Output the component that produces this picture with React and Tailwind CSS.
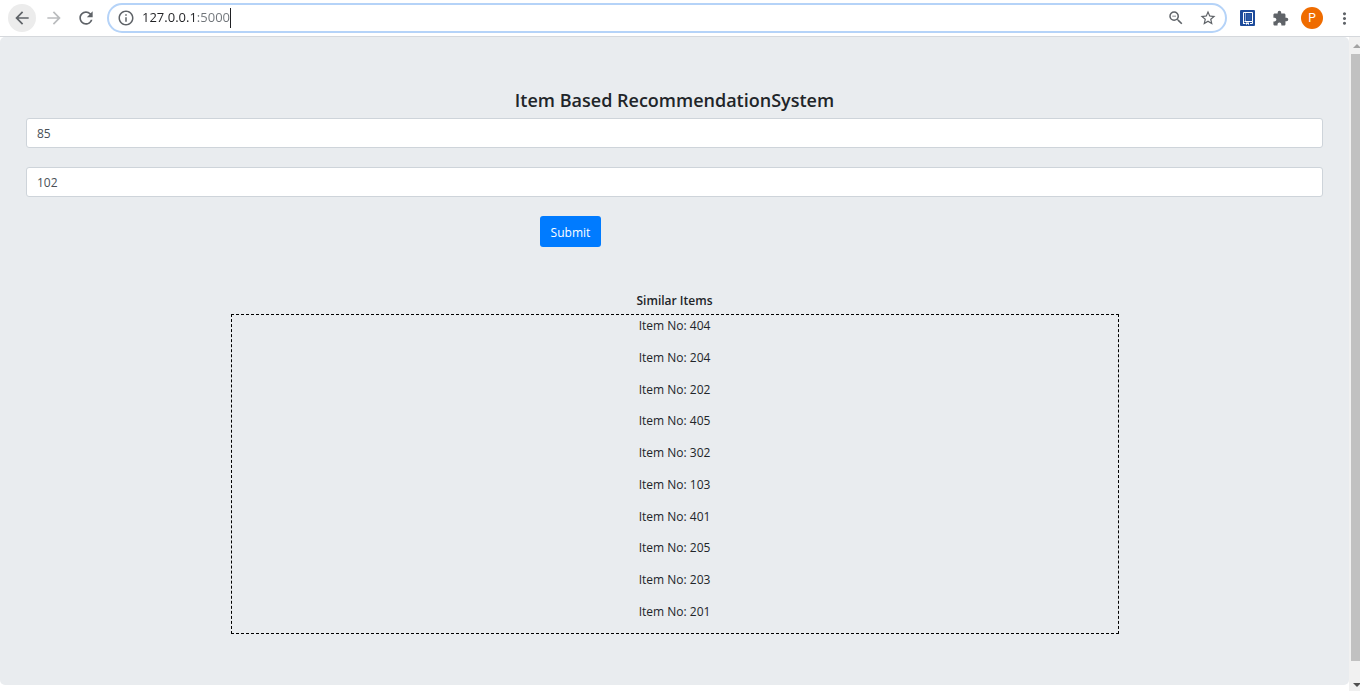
import React, { useState } from 'react';
import {
  MdArrowBack,
  MdArrowForward,
  MdRefresh,
  MdInfoOutline,
  MdZoomOut,
  MdStarBorder,
  MdExtension,
  MdMoreVert,
} from 'react-icons/md';

const items = [404, 204, 202, 405, 302, 103, 401, 205, 203, 201];

function NotebookIcon() {
  return (
    <svg width="15" height="16" viewBox="0 0 15 16" aria-hidden="true">
      <rect width="15" height="16" rx="1" fill="#1d4b9b" />
      <path d="M3.500 13V2.500H12.500V11.500H4.500" fill="none" stroke="#fff" strokeWidth="1" />
      <path d="M3 13.500H5.500M10 13.500H12.500V11.500" fill="none" stroke="#fff" strokeWidth="1" />
      <path d="M5.500 3V11" stroke="#8fa9d6" strokeWidth="1" />
      <rect x="7" y="4" width="4" height="6" fill="#2c5aa6" />
      <path d="M6 12.500V15L7.500 13.700L9 15V12.500Z" fill="#fff" />
    </svg>
  );
}

function BrowserBar() {
  const [url, setUrl] = useState('127.0.0.1:5000');
  return (
    <header className="flex h-[37px] shrink-0 items-center border-b border-[#d5d8dc] bg-white pl-2 pr-1.5 text-[#5f6368]">
      <nav className="flex items-center gap-1">
        <button type="button" aria-label="Back" className="flex size-7 items-center justify-center rounded-full bg-[#ececec]">
          <MdArrowBack size={20} />
        </button>
        <button type="button" aria-label="Forward" className="flex size-7 items-center justify-center text-[#babcbe]">
          <MdArrowForward size={20} />
        </button>
        <button type="button" aria-label="Reload" className="flex size-7 items-center justify-center">
          <MdRefresh size={20} />
        </button>
      </nav>
      <div className="ml-[7px] flex h-[30px] min-w-0 flex-1 items-center rounded-full border-2 border-[#b5d3f8] bg-white px-2">
        <button type="button" aria-label="Site information">
          <MdInfoOutline size={18} />
        </button>
        <input
          aria-label="Address"
          value={url}
          onChange={(e) => setUrl(e.target.value)}
          className="ml-[7px] bg-linear-to-r from-[#202124] from-[54px] to-[#6f7479] to-[54px] bg-clip-text text-[13px] text-transparent outline-none [field-sizing:content]"
        />
        <span className="h-5 w-px bg-[#202124]" />
        <div className="ml-auto flex items-center gap-[14px]">
          <button type="button" aria-label="Zoom">
            <MdZoomOut size={18} />
          </button>
          <button type="button" aria-label="Bookmark">
            <MdStarBorder size={18} />
          </button>
        </div>
      </div>
      <div className="ml-[13px] flex items-center">
        <button type="button" aria-label="Notebook">
          <NotebookIcon />
        </button>
        <button type="button" aria-label="Extensions" className="ml-[17px]">
          <MdExtension size={17} />
        </button>
        <button type="button" aria-label="Profile" className="ml-3 flex size-[22px] items-center justify-center rounded-full bg-[#ef6c00] font-[Roboto,sans-serif] text-xs text-white">
          P
        </button>
        <button type="button" aria-label="Menu" className="ml-3">
          <MdMoreVert size={19} />
        </button>
      </div>
    </header>
  );
}

function NumberField({ label, initial }) {
  const [value, setValue] = useState(initial);
  return (
    <input
      aria-label={label}
      value={value}
      onChange={(e) => setValue(e.target.value)}
      className="block h-[30px] w-full rounded-[3px] border border-[#ced4da] bg-white px-[10px] text-xs text-[#495057] outline-none"
    />
  );
}

function Scrollbar() {
  return (
    <div aria-hidden="true" className="flex w-[11px] shrink-0 flex-col items-end bg-[#f1f1f1]">
      <div className="flex h-[17px] w-[9px] items-center justify-end">
        <svg width="7" height="4" viewBox="0 0 7 4"><path d="M0 4L4 0L7 3V4Z" fill="#a3a3a3" /></svg>
      </div>
      <div className="w-[9px] flex-1 bg-[#c1c1c1]" />
      <div className="flex h-[30px] w-[9px] items-end justify-end pb-1">
        <svg width="7" height="4" viewBox="0 0 7 4"><path d="M0 0H7V1L4 4Z" fill="#505050" /></svg>
      </div>
    </div>
  );
}

export default function App() {
  return (
    <div className="flex min-h-screen flex-col bg-white font-['Open_Sans',sans-serif]">
      <BrowserBar />
      <div className="flex flex-1">
        <main className="min-w-0 flex-1 pb-1.5">
          <section className="h-full rounded-[5px] bg-[#e9ecef] px-[26px] py-[51px] text-xs leading-[22px] text-[#212529]">
            <form onSubmit={(e) => e.preventDefault()}>
              <h1 className="mb-[6px] text-center text-lg leading-6 font-semibold">Item Based RecommendationSystem</h1>
              <div className="flex flex-col gap-[19px]">
                <NumberField label="First item" initial="85" />
                <NumberField label="Second item" initial="102" />
                <div className="-mx-[26px] flex">
                  <button type="submit" className="ml-[40%] h-[31px] rounded-[3px] bg-[#007bff] px-[11px] pt-0.5 text-xs text-white">
                    Submit
                  </button>
                </div>
              </div>
            </form>
            <h2 className="mt-[43px] mb-0.5 text-center text-xs leading-[22px] font-semibold">Similar Items</h2>
            <ul className="mx-auto flex min-h-[320px] max-w-[888px] flex-col justify-between border border-dashed border-black pb-[10px] text-center">
              {items.map((n) => (
                <li key={n}>Item No: {n}</li>
              ))}
            </ul>
          </section>
        </main>
        <Scrollbar />
      </div>
    </div>
  );
}
